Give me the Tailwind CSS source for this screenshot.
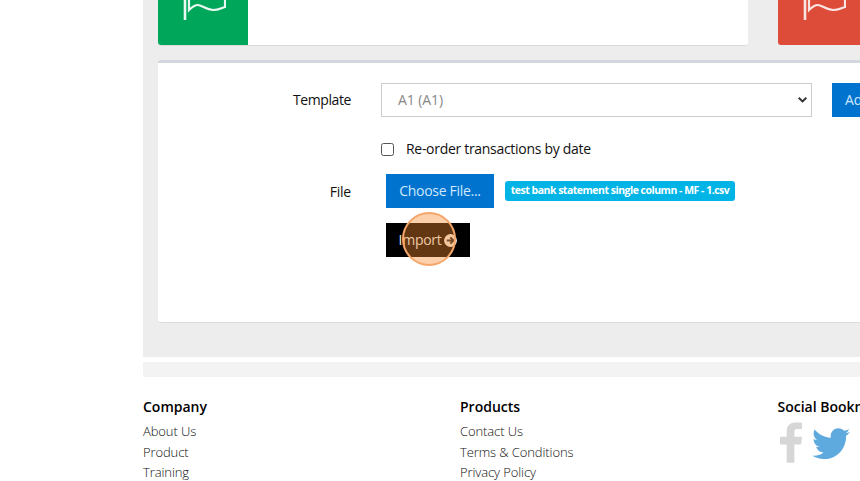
<!DOCTYPE html>
<html><head><meta charset="utf-8"><script src="https://cdn.jsdelivr.net/npm/@tailwindcss/browser@4"></script></head>
<body class="bg-white overflow-hidden font-['Open_Sans',sans-serif] text-[14px] tracking-[-0.2px] text-[#111]">
<div class="w-[860px] h-[481px] overflow-hidden pl-[143px] relative">
  <div class="w-[900px]">
    <div class="bg-[#eeeded] h-[357px] pl-[15px] flex flex-col">
      <div class="flex gap-[30px] h-[46px] shrink-0">
        <div class="w-[590px] bg-white rounded-b-[3px] border-b border-[#dadada] flex">
          <div class="w-[90px] h-[45px] bg-[#00a65a] rounded-bl-[3px] flex justify-center items-start">
            <svg width="46" height="22" viewBox="0 0 46 22" fill="none" stroke="#e9f8f0"><path stroke-width="2.6" d="M5 0V20"/><path stroke-width="2.2" d="M9 0V10C12 7 15 5 18 5S27 10 33 10S41 8 45 7V0"/></svg>
          </div>
        </div>
        <div class="w-[90px] h-[45px] bg-[#dd4b39] rounded-bl-[3px] flex justify-center items-start">
          <svg width="46" height="22" viewBox="0 0 46 22" fill="none" stroke="#f9e6e3"><path stroke-width="2.6" d="M5 0V20"/><path stroke-width="2.2" d="M9 0V10C12 7 15 5 18 5S27 10 33 10S41 8 45 7V0"/></svg>
        </div>
      </div>
      <div class="mt-[14px] h-[263px] bg-white border-t-[3px] border-[#d2d6de] border-b border-b-[#dcdcdc] rounded-[3px] shrink-0">
        <div class="flex items-start mt-[20px]">
          <label class="w-[193px] text-right leading-[34px] text-[14px] tracking-[-0.4px]">Template</label>
          <div class="ml-[30px] w-[431px] h-[34px] border border-[#ccc] flex items-center justify-between pl-[16px] pr-[4px] text-[#888] text-[14px] tracking-[-0.1px]">
            <span class="mb-[2px]">A1 (A1)</span>
            <svg width="9" height="6" viewBox="0 0 9 6" fill="none" stroke="#333" stroke-width="2"><path d="M0.7 0.8L4.5 4.4L8.3 0.8"/></svg>
          </div>
          <button class="ml-[20px] w-[80px] h-[34px] bg-[#0073cf] text-[#cfe8fb] text-left pl-[13px] pb-[2px] tracking-normal">Add</button>
        </div>
        <div class="flex items-center mt-[20px] ml-[223px] h-[24px]">
          <span class="w-[13px] h-[13px] border border-[#555] rounded-[2.5px] bg-white"></span>
          <span class="ml-[12px] mb-[2px] tracking-[-0.3px]">Re-order transactions by date</span>
        </div>
        <div class="flex items-center mt-[13px]">
          <label class="w-[193px] text-right">File</label>
          <button class="ml-[35px] w-[108px] h-[34px] bg-[#0073cf] text-[#cfe8fb] pb-[2px] tracking-[-0.3px]">Choose File...</button>
          <span class="ml-[11px] mt-[-1px] h-[20px] w-[230px] text-center bg-[#00b5e6] text-white text-[10.5px] font-bold leading-[18px] rounded-[3px] tracking-[-0.5px] whitespace-nowrap">test bank statement single column - MF - 1.csv</span>
        </div>
        <div class="ml-[228px] mt-[15px]">
          <button class="relative w-[84px] h-[34px] bg-black text-[#eee] flex items-center justify-center gap-[3px] tracking-[-0.3px]">
            <span class="mb-[2px]">Import</span>
            <svg width="13" height="13" viewBox="0 0 13 13"><circle cx="6.5" cy="6.5" r="6.4" fill="#f6f0e8"/><path d="M2.800 6.500H9M6.300 3.400L9.500 6.500L6.300 9.600" fill="none" stroke="#222" stroke-width="2"/></svg>
            <span class="absolute left-[16px] top-[-11px] w-[54px] h-[54px] rounded-full bg-[#f58a2e]/40 border-2 border-[#f5a66a]"></span>
          </button>
        </div>
      </div>
    </div>
    <div class="mt-[5px] h-[15px] bg-[#f3f3f3]"></div>
    <div class="flex mt-[20px]">
      <div class="w-[317px]">
        <h4 class="font-semibold text-[14px] leading-[20px] tracking-normal text-black">Company</h4>
        <ul class="mt-[4px] text-[13px] font-light leading-[20.5px] tracking-[-0.1px] text-[#111]"><li>About Us</li><li>Product</li><li>Training</li></ul>
      </div>
      <div class="w-[317.500px]">
        <h4 class="font-semibold text-[14px] leading-[20px] tracking-normal text-black">Products</h4>
        <ul class="mt-[4px] text-[13px] font-light leading-[20.5px] tracking-[-0.1px] text-[#111]"><li>Contact Us</li><li>Terms &amp; Conditions</li><li>Privacy Policy</li></ul>
      </div>
      <div>
        <h4 class="font-semibold text-[14px] leading-[20px] tracking-normal text-black whitespace-nowrap">Social Bookmarks</h4>
        <div class="flex items-start gap-[9px] mt-[5px] ml-[2px]">
          <svg width="23" height="41" viewBox="0 0 24 42"><path fill="#d6d6d6" d="M7 42V23H0V15H7V9C7 3 11 0 16 0C19 0 22 0 23 .5V7H18C15.5 7 15 8.5 15 10V15H23L22 23H15V42Z"/></svg>
          <svg width="38" height="32" viewBox="0 0 24 20" class="mt-[6px]"><path fill="#5ea9dd" d="M24 2.400c-.9.4-1.800.7-2.800.8 1-.6 1.800-1.600 2.200-2.700-1 .6-2 1-3.100 1.200C19.300.7 18 .1 16.700.1c-2.700 0-4.900 2.200-4.900 4.900 0 .4 0 .8.100 1.100C7.800 5.900 4.200 4 1.700.9 1.200 1.700 1 2.500 1 3.400c0 1.700.9 3.200 2.200 4.100-.8 0-1.600-.2-2.200-.6v.1c0 2.400 1.700 4.400 3.900 4.800-.7.200-1.500.2-2.200.1.600 2 2.400 3.400 4.600 3.400-1.700 1.300-3.800 2.100-6.100 2.100-.4 0-.8 0-1.200-.1 2.200 1.400 4.800 2.200 7.500 2.200 9.100 0 14-7.500 14-14v-.6c1-.7 1.800-1.600 2.500-2.500z"/></svg>
        </div>
      </div>
    </div>
  </div>
</div>
</body></html>
